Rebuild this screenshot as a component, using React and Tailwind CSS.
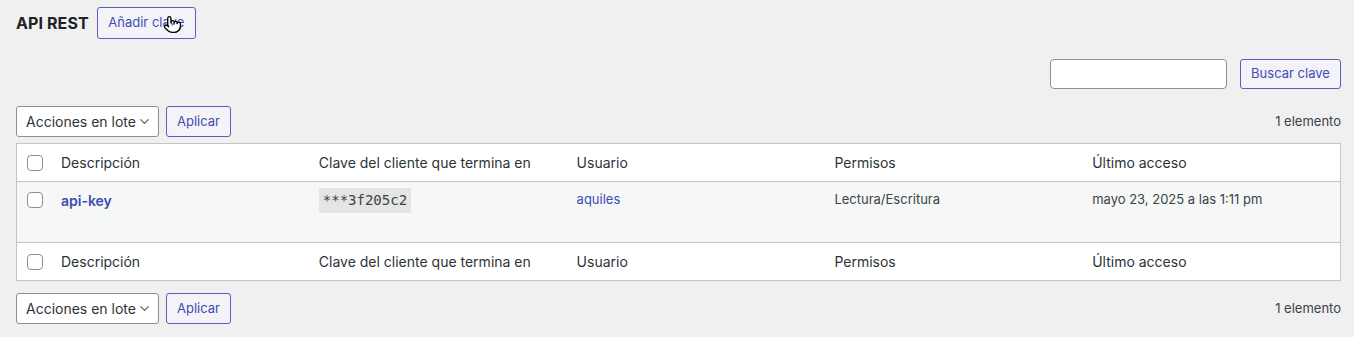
import { Pointer, ChevronDown } from "lucide-react";

const columns = [
  "Descripción",
  "Clave del cliente que termina en",
  "Usuario",
  "Permisos",
  "Último acceso",
];

function Checkbox() {
  return (
    <span className="block w-4 h-4 rounded-[4px] border border-[#8c8f94] bg-white" />
  );
}

function BulkActions() {
  return (
    <div className="flex items-center justify-between h-[31px]">
      <div className="flex items-center gap-[7px] h-full">
        <div className="flex items-center justify-between w-[143px] h-[31px] pl-[9px] pr-[6px] bg-white border border-[#8c8f94] rounded-[3px] text-[14px] text-[#2c3338]">
          <span>Acciones en lote</span>
          <ChevronDown size={15} strokeWidth={1.8} className="text-[#50575e]" />
        </div>
        <button className="h-[31px] w-[65px] rounded-[3px] border border-[#5460bd] bg-[#f4f4f8] text-[13px] text-[#3f4db3]">
          Aplicar
        </button>
      </div>
      <span className="text-[13px] text-[#3c434a]">1 elemento</span>
    </div>
  );
}

function HeaderRow({ top }) {
  return (
    <div
      className={
        "flex items-center h-[38px] bg-white text-[14px] text-[#2c3338] " +
        (top ? "border-b border-[#c3c4c7]" : "border-t border-[#c3c4c7]")
      }
    >
      <div className="w-[34px] pl-[10px] flex items-center">
        <Checkbox />
      </div>
      {columns.map((c) => (
        <div key={c} className="w-[258px] pl-[10px] truncate">
          {c}
        </div>
      ))}
    </div>
  );
}

export default function App() {
  return (
    <div
      className="min-h-screen bg-[#f0f0f1] pl-4 pr-[13px] pt-[7px] pb-4"
      style={{ fontFamily: "Inter, 'Liberation Sans', sans-serif" }}
    >
      <div className="flex items-center gap-2 h-8">
        <h1 className="text-[16px] font-bold text-[#1d2327] tracking-[0.1px]">API REST</h1>
        <div className="relative">
          <button className="h-8 w-[99px] rounded-[3px] border-[1.5px] border-[#5460bd] bg-[#f4f4f8] text-[13px] text-[#3f4db3]">
            Añadir clave
          </button>
          <Pointer
            size={19}
            strokeWidth={1.6}
            fill="#ffffff"
            className="absolute left-[66px] top-[8px] text-black"
          />
        </div>
      </div>

      <div className="flex justify-end items-center gap-[13px] mt-5 h-[30px]">
        <input className="w-[177px] h-[30px] bg-white border border-[#8c8f94] rounded-[4px]" />
        <button className="h-[30px] w-[101px] rounded-[3px] border border-[#5460bd] bg-[#f4f4f8] text-[13px] text-[#3f4db3]">
          Buscar clave
        </button>
      </div>

      <div className="mt-[17px]">
        <BulkActions />
      </div>

      <div className="mt-[6px] border border-[#c3c4c7] bg-white">
        <HeaderRow top />
        <div className="flex items-start h-[60px] bg-[#f6f7f7] text-[13px] text-[#3c434a] pt-[8px]">
          <div className="w-[34px] pl-[10px] flex items-center pt-[2px]">
            <Checkbox />
          </div>
          <div className="w-[258px] pl-[10px] text-[14px] font-semibold text-[#3f4db3]">
            api-key
          </div>
          <div className="w-[258px] pl-[10px] -mt-[2px]">
            <code
              className="inline-block px-[4px] py-[2px] bg-[#e5e5e5] text-[14px] text-[#3c434a]"
              style={{ fontFamily: "'DejaVu Sans Mono', monospace" }}
            >
              ***3f205c2
            </code>
          </div>
          <div className="w-[258px] pl-[10px] text-[#3f4db3]">aquiles</div>
          <div className="w-[258px] pl-[10px]">Lectura/Escritura</div>
          <div className="w-[258px] pl-[10px]">mayo 23, 2025 a las 1:11 pm</div>
        </div>
        <HeaderRow />
      </div>

      <div className="mt-3">
        <BulkActions />
      </div>
    </div>
  );
}
